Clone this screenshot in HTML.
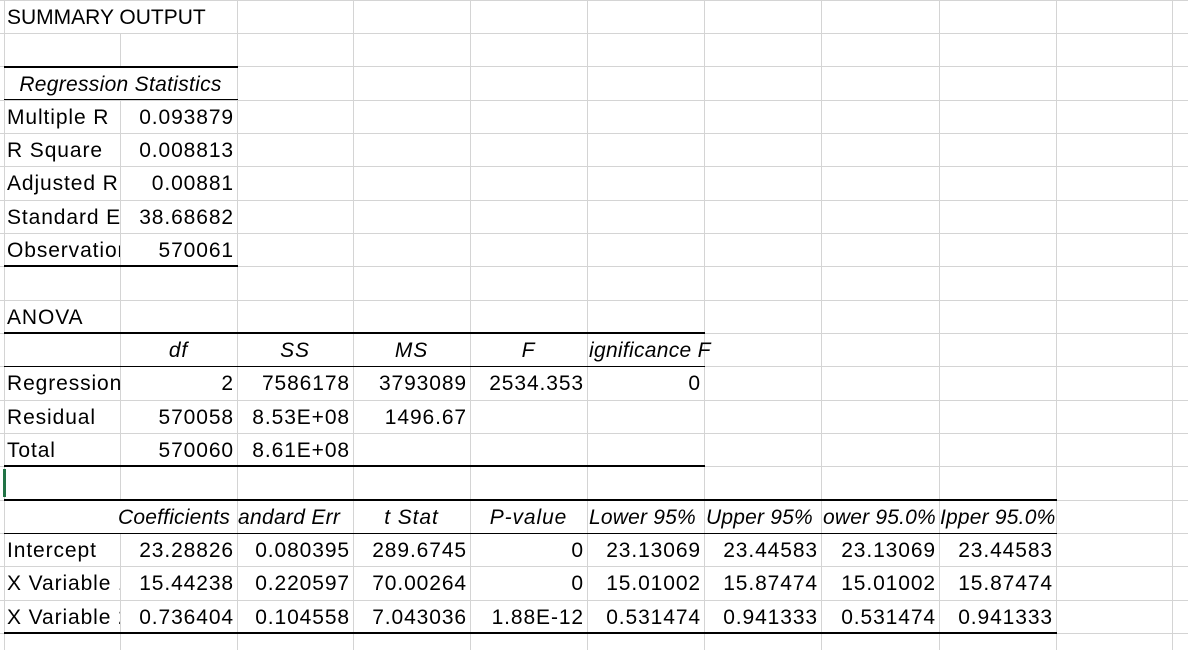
<!DOCTYPE html>
<html><head><meta charset="utf-8"><style>
body{margin:0;width:1188px;height:650px;background:#fff;position:relative;overflow:hidden;font-family:"Liberation Sans",Calibri,sans-serif;font-size:21px;letter-spacing:0.9px;color:#000}
.v{position:absolute;top:0;width:1px;height:650px;background:#d4d4d4}
.h{position:absolute;left:0;width:1188px;height:1px;background:#d4d4d4}
.b{position:absolute;background:#000}
.c{position:absolute;height:33px;line-height:36px;overflow:hidden;white-space:nowrap;padding:0 3px;box-sizing:border-box}
.r{text-align:right}.m{text-align:center}.i{font-style:italic}
</style></head><body>
<div class="v" style="left:4px"></div><div class="v" style="left:120px"></div><div class="v" style="left:237px"></div><div class="v" style="left:353px"></div><div class="v" style="left:470px"></div><div class="v" style="left:587px"></div><div class="v" style="left:704px"></div><div class="v" style="left:821px"></div><div class="v" style="left:939px"></div><div class="v" style="left:1056px"></div><div class="v" style="left:1172px"></div>
<div class="h" style="top:0"></div><div class="h" style="top:33px"></div><div class="h" style="top:66px"></div><div class="h" style="top:100px"></div><div class="h" style="top:133px"></div><div class="h" style="top:166px"></div><div class="h" style="top:200px"></div><div class="h" style="top:233px"></div><div class="h" style="top:266px"></div><div class="h" style="top:300px"></div><div class="h" style="top:333px"></div><div class="h" style="top:366px"></div><div class="h" style="top:400px"></div><div class="h" style="top:433px"></div><div class="h" style="top:466px"></div><div class="h" style="top:500px"></div><div class="h" style="top:533px"></div><div class="h" style="top:566px"></div><div class="h" style="top:600px"></div><div class="h" style="top:633px"></div>
<div style="position:absolute;left:5px;top:1px;width:231px;height:32px;background:#fff"></div>
<div style="position:absolute;left:5px;top:67px;width:231px;height:32px;background:#fff"></div>
<div style="position:absolute;left:5px;top:301px;width:115px;height:32px;background:#fff"></div>
<div style="position:absolute;left:5px;top:501px;width:231px;height:32px;background:#fff"></div>
<div class="b" style="left:4px;top:66px;width:234px;height:2px"></div>
<div class="b" style="left:4px;top:99px;width:234px;height:1px"></div>
<div class="b" style="left:4px;top:265px;width:234px;height:2px"></div>
<div class="b" style="left:4px;top:332px;width:701px;height:2px"></div>
<div class="b" style="left:4px;top:366px;width:701px;height:1px"></div>
<div class="b" style="left:4px;top:465px;width:701px;height:2px"></div>
<div class="b" style="left:4px;top:499px;width:1053px;height:2px"></div>
<div class="b" style="left:4px;top:533px;width:1053px;height:1px"></div>
<div class="b" style="left:4px;top:632px;width:1053px;height:2px"></div>
<div style="position:absolute;left:3px;top:469px;width:3px;height:28px;background:#217346"></div>
<div class="c" style="left:4px;top:0;width:300px;letter-spacing:0">SUMMARY OUTPUT</div>
<div class="c m i" style="left:4px;top:67px;width:233px;letter-spacing:0.3px">Regression Statistics</div>
<div class="c" style="left:4px;top:100px;width:116px">Multiple R</div><div class="c r" style="left:120px;top:100px;width:117px">0.093879</div>
<div class="c" style="left:4px;top:133px;width:116px">R Square</div><div class="c r" style="left:120px;top:133px;width:117px">0.008813</div>
<div class="c" style="left:4px;top:166px;width:116px">Adjusted R</div><div class="c r" style="left:120px;top:166px;width:117px">0.00881</div>
<div class="c" style="left:4px;top:200px;width:116px">Standard Error</div><div class="c r" style="left:120px;top:200px;width:117px">38.68682</div>
<div class="c" style="left:4px;top:233px;width:116px">Observations</div><div class="c r" style="left:120px;top:233px;width:117px">570061</div>
<div class="c" style="left:4px;top:300px;width:116px">ANOVA</div>
<div class="c m i" style="left:120px;top:333px;width:117px">df</div><div class="c m i" style="left:237px;top:333px;width:116px">SS</div><div class="c m i" style="left:353px;top:333px;width:117px">MS</div><div class="c m i" style="left:470px;top:333px;width:117px">F</div><div class="c i" style="left:587px;top:333px;width:140px;padding-left:2px;letter-spacing:0.3px">ignificance F</div>
<div class="c" style="left:4px;top:366px;width:116px">Regression</div><div class="c r" style="left:120px;top:366px;width:117px">2</div><div class="c r" style="left:237px;top:366px;width:116px">7586178</div><div class="c r" style="left:353px;top:366px;width:117px">3793089</div><div class="c r" style="left:470px;top:366px;width:117px">2534.353</div><div class="c r" style="left:587px;top:366px;width:117px">0</div>
<div class="c" style="left:4px;top:400px;width:116px">Residual</div><div class="c r" style="left:120px;top:400px;width:117px">570058</div><div class="c r" style="left:237px;top:400px;width:116px">8.53E+08</div><div class="c r" style="left:353px;top:400px;width:117px">1496.67</div>
<div class="c" style="left:4px;top:433px;width:116px">Total</div><div class="c r" style="left:120px;top:433px;width:117px">570060</div><div class="c r" style="left:237px;top:433px;width:116px">8.61E+08</div>
<div class="c i" style="left:118px;top:500px;width:119px;padding:0;letter-spacing:0.2px">Coefficients</div><div class="c i" style="left:237px;top:500px;width:116px;padding-left:1px;letter-spacing:0.3px">andard Err</div><div class="c m i" style="left:353px;top:500px;width:117px">t Stat</div><div class="c m i" style="left:470px;top:500px;width:117px">P-value</div><div class="c i" style="left:587px;top:500px;width:117px;padding-left:2px;letter-spacing:0.2px">Lower 95%</div><div class="c i" style="left:704px;top:500px;width:117px;padding-left:2px;letter-spacing:0.2px">Upper 95%</div><div class="c i" style="left:821px;top:500px;width:118px;padding-left:2px;letter-spacing:0.2px">ower 95.0%</div><div class="c i" style="left:939px;top:500px;width:140px;padding-left:1px;letter-spacing:0.2px">Ipper 95.0%</div>
<div class="c" style="left:4px;top:533px;width:116px">Intercept</div><div class="c r" style="left:120px;top:533px;width:117px">23.28826</div><div class="c r" style="left:237px;top:533px;width:116px">0.080395</div><div class="c r" style="left:353px;top:533px;width:117px">289.6745</div><div class="c r" style="left:470px;top:533px;width:117px">0</div><div class="c r" style="left:587px;top:533px;width:117px">23.13069</div><div class="c r" style="left:704px;top:533px;width:117px">23.44583</div><div class="c r" style="left:821px;top:533px;width:118px">23.13069</div><div class="c r" style="left:939px;top:533px;width:117px">23.44583</div>
<div class="c" style="left:4px;top:566px;width:116px">X Variable 1</div><div class="c r" style="left:120px;top:566px;width:117px">15.44238</div><div class="c r" style="left:237px;top:566px;width:116px">0.220597</div><div class="c r" style="left:353px;top:566px;width:117px">70.00264</div><div class="c r" style="left:470px;top:566px;width:117px">0</div><div class="c r" style="left:587px;top:566px;width:117px">15.01002</div><div class="c r" style="left:704px;top:566px;width:117px">15.87474</div><div class="c r" style="left:821px;top:566px;width:118px">15.01002</div><div class="c r" style="left:939px;top:566px;width:117px">15.87474</div>
<div class="c" style="left:4px;top:600px;width:116px">X Variable 2</div><div class="c r" style="left:120px;top:600px;width:117px">0.736404</div><div class="c r" style="left:237px;top:600px;width:116px">0.104558</div><div class="c r" style="left:353px;top:600px;width:117px">7.043036</div><div class="c r" style="left:470px;top:600px;width:117px">1.88E-12</div><div class="c r" style="left:587px;top:600px;width:117px">0.531474</div><div class="c r" style="left:704px;top:600px;width:117px">0.941333</div><div class="c r" style="left:821px;top:600px;width:118px">0.531474</div><div class="c r" style="left:939px;top:600px;width:117px">0.941333</div>
</body></html>
